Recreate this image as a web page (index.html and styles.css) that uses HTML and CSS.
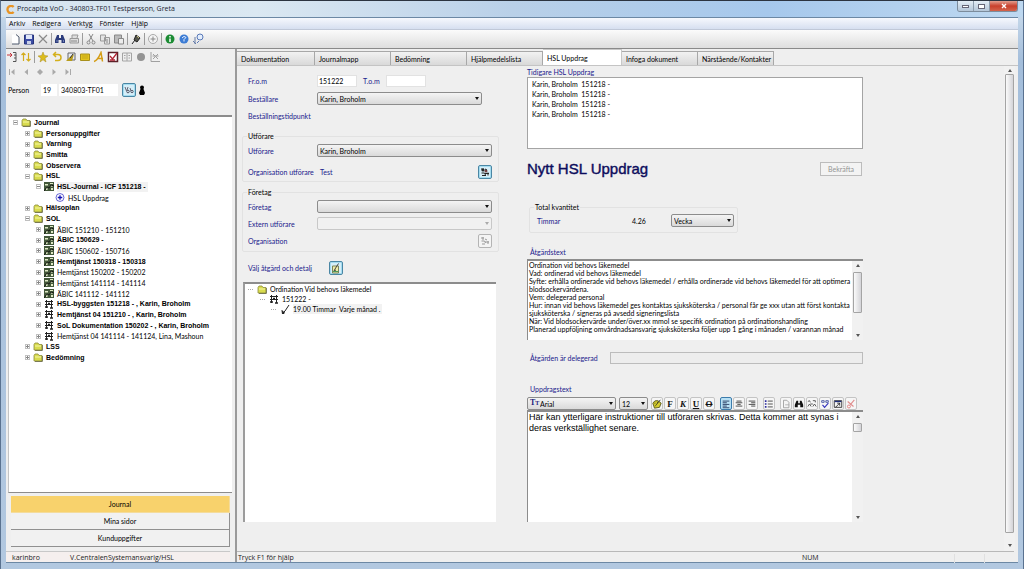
FILE: index.html
```html
<!DOCTYPE html>
<html lang="sv">
<head>
<meta charset="utf-8">
<title>Procapita VoO</title>
<link rel="stylesheet" href="styles.css">
</head>
<body>
<svg class="defs" aria-hidden="true">
  <symbol id="folder" viewBox="0 0 10 9"><path d="M1 2.5 2 1h3l1 1.5h3V8H1z" fill="#d9dc4e" stroke="#8c8c3c" stroke-width=".8"/><path d="M2 4h6" stroke="#f5f6a8"/><path d="M9.4 3v5.5H2" fill="none" stroke="#55552c" stroke-width=".7"/></symbol>
  <symbol id="plan" viewBox="0 0 10 9"><path d="M0 0h10v9H0z" fill="#43583a"/><path d="M1 2h3v1.500H1zM6 1h3v1H6zM2 5h1.500v3H2zM5.500 4l3-1v2zM7 6h2v2H7z" fill="#dfe8c4"/><path d="M0 9l3-4 2 1 2-3 3 1" fill="none" stroke="#151a12"/></symbol>
  <symbol id="block" viewBox="0 0 10 9"><path d="M2.500 0v8M7.500 0v8M1 1.500h8M1 4.500h8" stroke="#222" fill="none"/><path d="M1 7h3M6 8h3M4 3.500h2" stroke="#222" stroke-width="1.600"/></symbol>
  <symbol id="plus" viewBox="0 0 10 10"><circle cx="5" cy="5" r="4.400" fill="#fff" stroke="#2c2cc4" stroke-width=".8"/><path d="M5 2.500v5M2.500 5h5" stroke="#1212b4" stroke-width="1.400"/></symbol>
  <symbol id="tick" viewBox="0 0 10 9"><path d="M9 0 5 6 3 8" fill="none" stroke="#222"/><path d="M2 5.500 4.500 8 2.500 9z" fill="#222" stroke="#222"/></symbol>
  <symbol id="new" viewBox="0 0 12 12"><path d="M3 1.500h4.500L10 4v7H3z" fill="#fff"/><path d="M7 1.500 10 4v7H3" fill="none" stroke="#4c586c"/></symbol>
  <symbol id="save" viewBox="0 0 12 12"><path d="M1.500 2h9v9h-9z" fill="#3c4ca4" stroke="#26347c"/><path d="M3 2h6v4H3z" fill="#dfe6f8"/><path d="M4 8h4v3H4z" fill="#c8d0e8"/></symbol>
  <symbol id="cross" viewBox="0 0 12 12"><path d="M2 2l8 8M10 2l-8 8" stroke="#8a8a8a" stroke-width="1.200"/></symbol>
  <symbol id="find" viewBox="0 0 12 12"><path d="M3 2h2v3h2V2h2l2 5v3H7.500V7h-3v3H1V7z" fill="#2c3c7c"/><path d="M2.500 8h1M9 8h1" stroke="#b8c8f4"/></symbol>
  <symbol id="findk" viewBox="0 0 12 12"><path d="M3 2h2v3h2V2h2l2 5v3H7.500V7h-3v3H1V7z" fill="#111"/></symbol>
  <symbol id="print" viewBox="0 0 12 12"><path d="M4 5V2h6L9 5M2 5.500h8.500V10H2z" fill="#ddd" stroke="#999"/><path d="M3 8h6" stroke="#888"/></symbol>
  <symbol id="cut" viewBox="0 0 12 12"><path d="M4 1l4 7M8 1 4 8" stroke="#888"/><circle cx="3.500" cy="9.500" r="1.500" fill="none" stroke="#888"/><circle cx="8.500" cy="9.500" r="1.500" fill="none" stroke="#888"/></symbol>
  <symbol id="copy" viewBox="0 0 12 12"><path d="M1.500 2h5v6h-5zM5.500 4.500h5V11h-5z" fill="#e4e4e4" stroke="#999"/><path d="M7 7h2M7 9h2" stroke="#888"/></symbol>
  <symbol id="paste" viewBox="0 0 12 12"><path d="M1.500 2h7v8h-7z" fill="#bbb" stroke="#888"/><path d="M5.500 5.500h5V11h-5z" fill="#ececec" stroke="#888"/></symbol>
  <symbol id="pen" viewBox="0 0 12 12"><path d="M6 2l4 3-3 4-3-2z" fill="#55564c" stroke="#222"/><path d="M5 7l-3 4" stroke="#222"/><path d="M7 3l2 2" stroke="#c8c080"/></symbol>
  <symbol id="target" viewBox="0 0 12 12"><circle cx="6" cy="6" r="4.500" fill="#f4f4f4" stroke="#aaa"/><path d="M6 3.500v5M3.500 6h5" stroke="#888"/></symbol>
  <symbol id="info" viewBox="0 0 12 12"><circle cx="6" cy="6" r="4.500" fill="#1c8c34"/><path d="M6 3v1.500M6 5.500V9" stroke="#fff" stroke-width="1.500"/></symbol>
  <symbol id="help" viewBox="0 0 12 12"><circle cx="6" cy="6" r="4.500" fill="#3c7cd4"/><path d="M4 5q2-3 4-.5L6 6.500v2" fill="none" stroke="#e8f0ff"/></symbol>
  <symbol id="what" viewBox="0 0 12 12"><path d="M3 4v7M1 8l3 3" stroke="#667ca8" fill="none"/><circle cx="8" cy="4" r="3" fill="#e4eefc" stroke="#5878b8"/><path d="M7 8 5 10" stroke="#5878b8"/></symbol>
  <symbol id="exit" viewBox="0 0 12 12"><path d="M1 4h5M4 2l2 2-2 2" stroke="#c4343c" fill="none"/><path d="M7 1.500h3v9H7M8 4h2M8 7h2" stroke="#555" fill="none"/></symbol>
  <symbol id="sort" viewBox="0 0 12 12"><path d="M3.500 10V2M1.500 4l2-2 2 2M8.500 2v8M6.500 8l2 2 2-2" fill="none" stroke="#d4ac1c" stroke-width="1.200"/></symbol>
  <symbol id="star" viewBox="0 0 12 12"><path d="M6 1l1.400 3.500L11 5 8 7.200 9 11 6 8.800 3 11l1-3.800L1 5l3.600-.5z" fill="#dcbc1c" stroke="#a88c1c" stroke-width=".5"/></symbol>
  <symbol id="undo" viewBox="0 0 12 12"><path d="M3 3.500h4a3 3 0 0 1 0 6H4M5 1 2.500 3.500 5 6" fill="none" stroke="#d4b01c" stroke-width="1.500"/></symbol>
  <symbol id="edit" viewBox="0 0 12 12"><path d="M3 2h7v7H3z" fill="#e8ecf4" stroke="#666"/><path d="M1 10h6L9 3 5 6z" fill="#b89c1c"/><path d="M8 3 5 7" stroke="#333"/></symbol>
  <symbol id="card" viewBox="0 0 12 12"><path d="M1.500 3h9v6.500h-9z" fill="#e4c41c" stroke="#a8901c"/><path d="M3 5h6M3 7h6" stroke="#b09820" stroke-width=".6"/></symbol>
  <symbol id="fonta" viewBox="0 0 12 12"><path d="M1 10.500C4 10 6 6 8 1.500l1.500 9M4 7.500h6" fill="none" stroke="#d49c14" stroke-width="1.500"/></symbol>
  <symbol id="check" viewBox="0 0 12 12"><path d="M1.500 1.500h9v9h-9z" fill="#fff" stroke="#5c2028" stroke-width="1.500"/><path d="M3 5l2.500 3L10 2M3 9h5" fill="none" stroke="#b42434" stroke-width="1.300"/></symbol>
  <symbol id="book" viewBox="0 0 12 12"><path d="M1.500 2h9v8h-9zM6 2v8M3 4.500h1.500M7.500 4.500H9M3 7h1.500M7.500 7H9" fill="none" stroke="#a4a4a4"/></symbol>
  <symbol id="dot" viewBox="0 0 12 12"><circle cx="6" cy="6" r="4" fill="#949494"/></symbol>
  <symbol id="chart" viewBox="0 0 12 12"><path d="M2 1v9.500h9M4 8l5-5M4 3l5 5M3.500 5h6" fill="none" stroke="#a0a0a0"/></symbol>
  <symbol id="first" viewBox="0 0 12 12"><path d="M3.500 3v6" stroke="#aaa"/><path d="M8.500 3v6L5 6z" fill="#aaa"/></symbol>
  <symbol id="prev" viewBox="0 0 12 12"><path d="M8 3v6L4.500 6z" fill="#aaa"/></symbol>
  <symbol id="dia" viewBox="0 0 12 12"><path d="M6 3l3 3-3 3-3-3z" fill="#aaa"/></symbol>
  <symbol id="next" viewBox="0 0 12 12"><path d="M4.500 3v6L8 6z" fill="#aaa"/></symbol>
  <symbol id="last" viewBox="0 0 12 12"><path d="M8.500 3v6" stroke="#aaa"/><path d="M3.500 3v6L7 6z" fill="#aaa"/></symbol>
  <symbol id="glasses" viewBox="0 0 12 12"><path d="M2 3l1.500 4M5 3 4 6M7 4l1 3" stroke="#667" fill="none"/><circle cx="5" cy="7.500" r="1.300" fill="none" stroke="#556"/><circle cx="9" cy="7.500" r="1.200" fill="none" stroke="#556"/></symbol>
  <symbol id="person" viewBox="0 0 12 12"><circle cx="6" cy="3.500" r="2" fill="#000"/><path d="M4.500 5h3L9 9l-1 2H4L3 9z" fill="#000"/></symbol>
  <symbol id="people" viewBox="0 0 12 12"><circle cx="4" cy="4" r="1.600" fill="#222"/><circle cx="7" cy="5" r="1.500" fill="#744"/><path d="M2 3h3M6 3l2 1M2.500 7h3l1 2M6 7.500h4M9 6.500v3M3 9.500h4" stroke="#222" fill="none"/></symbol>
  <symbol id="peopleg" viewBox="0 0 12 12"><path d="M2 3h3M6 4l2 1M2.500 6h3l1 2M6 7h4M9 6v3M3 9h3M4 2v3" stroke="#999" fill="none"/></symbol>
  <symbol id="action" viewBox="0 0 12 12"><path d="M2.500 4h6v7h-6z" fill="#f0eca8" stroke="#7c8458"/><path d="M8.500 1.500 5 7l-1 2 2-1" fill="none" stroke="#444"/><path d="M3 9.500h5" stroke="#4c9c5c"/></symbol>
  <symbol id="paint" viewBox="0 0 12 12"><path d="M1 5q2-4 6-3l4 3-2 5-6 1z" fill="#d4cc2c" stroke="#4c4c14"/><path d="M10 1 5 7M3 5h1M6 4h1M4 8h1" stroke="#222"/></symbol>
  <symbol id="al" viewBox="0 0 12 12"><path d="M2 2.500h8M2 4.500h5M2 6.500h8M2 8.500h5M2 10.500h8" stroke="#1c2c54"/></symbol>
  <symbol id="ac" viewBox="0 0 12 12"><path d="M3 2.500h6M2 4.500h8M4 6.500h4M2 8.500h8" stroke="#333"/></symbol>
  <symbol id="ar" viewBox="0 0 12 12"><path d="M2 2.500h8M5 4.500h5M2 6.500h8M5 8.500h5" stroke="#333"/></symbol>
  <symbol id="list" viewBox="0 0 12 12"><path d="M4.500 2.500h6M4.500 6h6M4.500 9.500h6" stroke="#333"/><path d="M1 2.500h2M1 6h2M1 9.500h2" stroke="#2c2c9c" stroke-width="2"/></symbol>
  <symbol id="doc" viewBox="0 0 12 12"><path d="M3 1.500h4L9.500 4v6.500H3z" fill="#f4f4f4" stroke="#999"/><path d="M5 7h5" stroke="#aaa"/></symbol>
  <symbol id="swap" viewBox="0 0 12 12"><path d="M1 3l2-1 1 2M7 2h3v2M1 9l2-3 2 3M7 9l2-3 2 3M4 6h3" fill="none" stroke="#444"/></symbol>
  <symbol id="spell" viewBox="0 0 12 12"><path d="M2 2h3v2H2zM7 2h3v2H7z" fill="none" stroke="#3c4c9c"/><path d="M3 7l2.500 3L10 5" fill="none" stroke="#3434bc" stroke-width="1.400"/></symbol>
  <symbol id="popup" viewBox="0 0 12 12"><path d="M1.500 2h9v8h-9z" fill="#f4f4f4" stroke="#222"/><path d="M2 3h8" stroke="#1c2c7c" stroke-width="1.500"/><path d="M3 10l5-5M5 5h3v3" fill="none" stroke="#222"/></symbol>
  <symbol id="erase" viewBox="0 0 12 12"><path d="M10 1 5 7M2 3l7 6" stroke="#e08c8c" stroke-width="1.300"/><circle cx="3.500" cy="9" r="1.800" fill="none" stroke="#e07474"/></symbol>
</svg>

<div class="window">
  <header class="titlebar">
    <svg class="logo" viewBox="0 0 10 10"><path d="M8.500 2.200A4 4 0 1 0 8.500 7.800" fill="none" stroke="#e89424" stroke-width="2.600"/></svg>
    <h1 class="caption">Procapita VoO - 340803-TF01 Testpersson, Greta</h1>
    <div class="winbtns">
      <button class="winbtn" aria-label="Minimera"><i class="min"></i></button>
      <button class="winbtn" aria-label="Maximera"><i class="max"></i></button>
      <button class="winbtn close" aria-label="Stäng"><svg viewBox="0 0 8 6"><path d="M2 1l4 4M6 1 2 5" stroke="#fff" stroke-width="1.400"/></svg></button>
    </div>
  </header>

  <div class="client">
    <nav class="menu">
      <button>Arkiv</button><button>Redigera</button><button>Verktyg</button><button>Fönster</button><button>Hjälp</button>
    </nav>
    <div class="tools main-tools">
      <button aria-label="Ny"><svg><use href="#new"/></svg></button>
      <button aria-label="Spara"><svg><use href="#save"/></svg></button>
      <button aria-label="Ta bort"><svg><use href="#cross"/></svg></button>
      <i class="sep"></i>
      <button aria-label="Sök"><svg><use href="#find"/></svg></button>
      <button aria-label="Skriv ut"><svg><use href="#print"/></svg></button>
      <i class="sep"></i>
      <button aria-label="Klipp ut"><svg><use href="#cut"/></svg></button>
      <button aria-label="Kopiera"><svg><use href="#copy"/></svg></button>
      <button aria-label="Klistra in"><svg><use href="#paste"/></svg></button>
      <i class="sep"></i>
      <button aria-label="Signera"><svg><use href="#pen"/></svg></button>
      <i class="sep"></i>
      <button aria-label="Lägg till"><svg><use href="#target"/></svg></button>
      <i class="sep"></i>
      <button aria-label="Info"><svg><use href="#info"/></svg></button>
      <button aria-label="Hjälp"><svg><use href="#help"/></svg></button>
      <button aria-label="Förklaring"><svg><use href="#what"/></svg></button>
    </div>

    <div class="body">
      <aside class="side">
        <div class="tools side-tools">
          <button aria-label="Dölj"><svg><use href="#exit"/></svg></button>
          <button aria-label="Sortera"><svg><use href="#sort"/></svg></button>
          <i class="sep"></i>
          <button aria-label="Favorit"><svg><use href="#star"/></svg></button>
          <button aria-label="Ångra"><svg><use href="#undo"/></svg></button>
          <button aria-label="Redigera"><svg><use href="#edit"/></svg></button>
          <button aria-label="Kort"><svg><use href="#card"/></svg></button>
          <button aria-label="Anteckning"><svg><use href="#fonta"/></svg></button>
          <button aria-label="Bevakning"><svg><use href="#check"/></svg></button>
          <button aria-label="Bok"><svg><use href="#book"/></svg></button>
          <button aria-label="Status"><svg><use href="#dot"/></svg></button>
          <button aria-label="Diagram"><svg><use href="#chart"/></svg></button>
        </div>
        <div class="tools nav-tools">
          <button aria-label="Första"><svg><use href="#first"/></svg></button>
          <button aria-label="Föregående"><svg><use href="#prev"/></svg></button>
          <button aria-label="Aktuell"><svg><use href="#dia"/></svg></button>
          <button aria-label="Nästa"><svg><use href="#next"/></svg></button>
          <button aria-label="Sista"><svg><use href="#last"/></svg></button>
        </div>
        <div class="person">
          <label for="cent">Person</label>
          <input id="cent" class="cent" value="19">
          <input class="pnr" aria-label="Personnummer" value="340803-TF01">
          <button class="sq" aria-label="Visa"><svg><use href="#glasses"/></svg></button>
          <svg class="ic"><use href="#person"/></svg>
        </div>
        <ul class="tree journal">
          <li class="l1 b"><i class="ex open"></i><svg><use href="#folder"/></svg><span>Journal</span></li>
          <li class="l2 b"><i class="ex"></i><svg><use href="#folder"/></svg><span>Personuppgifter</span></li>
          <li class="l2 b"><i class="ex"></i><svg><use href="#folder"/></svg><span>Varning</span></li>
          <li class="l2 b"><i class="ex"></i><svg><use href="#folder"/></svg><span>Smitta</span></li>
          <li class="l2 b"><i class="ex"></i><svg><use href="#folder"/></svg><span>Observera</span></li>
          <li class="l2 b"><i class="ex open"></i><svg><use href="#folder"/></svg><span>HSL</span></li>
          <li class="l3 b"><i class="ex open"></i><svg><use href="#plan"/></svg><span class="sel">HSL-Journal - ICF 151218 -</span></li>
          <li class="l4"><i class="ex none"></i><svg><use href="#plus"/></svg><span>HSL Uppdrag</span></li>
          <li class="l2 b"><i class="ex"></i><svg><use href="#folder"/></svg><span>Hälsoplan</span></li>
          <li class="l2 b"><i class="ex open"></i><svg><use href="#folder"/></svg><span>SOL</span></li>
          <li class="l3"><i class="ex"></i><svg><use href="#plan"/></svg><span>ÄBIC 151210 - 151210</span></li>
          <li class="l3 b"><i class="ex"></i><svg><use href="#plan"/></svg><span>ÄBIC 150629 -</span></li>
          <li class="l3"><i class="ex"></i><svg><use href="#plan"/></svg><span>ÄBIC 150602 - 150716</span></li>
          <li class="l3 b"><i class="ex"></i><svg><use href="#plan"/></svg><span>Hemtjänst 150318 - 150318</span></li>
          <li class="l3"><i class="ex"></i><svg><use href="#plan"/></svg><span>Hemtjänst 150202 - 150202</span></li>
          <li class="l3"><i class="ex"></i><svg><use href="#plan"/></svg><span>Hemtjänst 141114 - 141114</span></li>
          <li class="l3"><i class="ex"></i><svg><use href="#plan"/></svg><span>ÄBIC 141112 - 141112</span></li>
          <li class="l3 b"><i class="ex"></i><svg><use href="#block"/></svg><span>HSL-byggsten 151218 - , Karin, Broholm</span></li>
          <li class="l3 b"><i class="ex"></i><svg><use href="#block"/></svg><span>Hemtjänst 04 151210 - , Karin, Broholm</span></li>
          <li class="l3 b"><i class="ex"></i><svg><use href="#block"/></svg><span>SoL Dokumentation 150202 - , Karin, Broholm</span></li>
          <li class="l3"><i class="ex"></i><svg><use href="#block"/></svg><span>Hemtjänst 04 141114 - 141124, Lina, Mashoun</span></li>
          <li class="l2 b"><i class="ex"></i><svg><use href="#folder"/></svg><span>LSS</span></li>
          <li class="l2 b"><i class="ex"></i><svg><use href="#folder"/></svg><span>Bedömning</span></li>
        </ul>
        <div class="stack">
          <button class="on">Journal</button>
          <button>Mina sidor</button>
          <button>Kunduppgifter</button>
        </div>
        <footer class="status"><span class="user">karinbro</span><span>V.CentralenSystemansvarig/HSL</span></footer>
      </aside>

      <main class="work">
        <nav class="tabs">
          <button>Dokumentation</button><button>Journalmapp</button><button>Bedömning</button><button>Hjälpmedelslista</button><button class="on">HSL Uppdrag</button><button>Infoga dokument</button><button>Närstående/Kontakter</button>
        </nav>
        <div class="page">
          <form class="left">
            <div class="row">
              <label class="lab" for="from">Fr.o.m</label><input id="from" class="date" value="151222">
              <label class="tom" for="to">T.o.m</label><input id="to" class="date">
            </div>
            <div class="row">
              <label class="lab" for="best">Beställare</label>
              <span class="dd short"><select id="best"><option>Karin, Broholm</option></select></span>
            </div>
            <div class="row"><span class="lab">Beställningstidpunkt</span></div>
            <fieldset>
              <legend>Utförare</legend>
              <div class="row">
                <label class="lab" for="utf">Utförare</label>
                <span class="dd"><select id="utf"><option>Karin, Broholm</option></select></span>
              </div>
              <div class="row org">
                <span class="lab">Organisation utförare</span><span class="val">Test</span>
                <button type="button" class="sq" aria-label="Välj organisation"><svg><use href="#people"/></svg></button>
              </div>
            </fieldset>
            <fieldset>
              <legend>Företag</legend>
              <div class="row">
                <label class="lab" for="ftg">Företag</label>
                <span class="dd"><select id="ftg"><option></option></select></span>
              </div>
              <div class="row">
                <label class="lab" for="ext">Extern utförare</label>
                <span class="dd off"><select id="ext" disabled><option></option></select></span>
              </div>
              <div class="row last">
                <span class="lab">Organisation</span><span class="val"></span>
                <button type="button" class="sq off" aria-label="Välj organisation" disabled><svg><use href="#peopleg"/></svg></button>
              </div>
            </fieldset>
            <div class="row pick">
              <span class="lab">Välj åtgärd och detalj</span>
              <button type="button" class="sq" aria-label="Välj åtgärd"><svg><use href="#action"/></svg></button>
            </div>
            <ul class="tree detail">
              <li class="d1"><i class="ln"></i><svg><use href="#folder"/></svg><span>Ordination Vid behovs läkemedel</span></li>
              <li class="d2"><i class="ln"></i><svg><use href="#block"/></svg><span>151222 -</span></li>
              <li class="d3"><i class="ln"></i><svg><use href="#tick"/></svg><span class="sel">19.00 Timmar&nbsp; Varje månad .</span></li>
            </ul>
          </form>

          <section class="right">
            <span class="cap">Tidigare HSL Uppdrag</span>
            <ul class="earlier">
              <li>Karin, Broholm&nbsp; 151218 -</li><li>Karin, Broholm&nbsp; 151218 -</li><li>Karin, Broholm&nbsp; 151218 -</li><li>Karin, Broholm&nbsp; 151218 -</li>
            </ul>
            <div class="headline"><h2>Nytt HSL Uppdrag</h2><button class="confirm" disabled>Bekräfta</button></div>
            <fieldset class="total">
              <legend>Total kvantitet</legend>
              <div class="row">
                <label class="unit" for="per">Timmar</label><span class="num">4.26</span>
                <span class="dd per"><select id="per"><option>Vecka</option></select></span>
              </div>
            </fieldset>
            <label class="cap indent" for="atg">Åtgärdstext</label>
            <div class="area small">
              <textarea id="atg">Ordination vid behovs läkemedel
Vad: ordinerad vid behovs läkemedel
Syfte: erhålla ordinerade vid behovs läkemedel / erhålla ordinerade vid behovs läkemedel för att optimera
blodsockervärdena.
Vem: delegerad personal
Hur: innan vid behovs läkemedel ges kontaktas sjuksköterska / personal får ge xxx utan att först kontakta
sjuksköterska / signeras på avsedd signeringslista
När: Vid blodsockervärde under/över.xx mmol se specifik ordination på ordinationshandling
Planerad uppföljning omvårdnadsansvarig sjuksköterska följer upp 1 gång i månaden / varannan månad</textarea>
              <div class="bar"><i class="up"></i><i class="thumb t1"></i><i class="down"></i></div>
            </div>
            <div class="row deleg"><label class="cap" for="del">Åtgärden är delegerad</label><input id="del" disabled></div>
            <label class="cap indent" for="upp">Uppdragstext</label>
            <div class="rich">
              <span class="dd font"><i class="tt">T<b>T</b></i><select aria-label="Typsnitt"><option>Arial</option></select></span>
              <span class="dd size"><select aria-label="Storlek"><option>12</option></select></span>
              <div class="grp">
                <button aria-label="Färg"><svg><use href="#paint"/></svg></button>
                <button class="bd">F</button><button class="bd it">K</button><button class="bd un">U</button><button class="bd st">O</button>
              </div>
              <div class="grp">
                <button class="act" aria-label="Vänster"><svg><use href="#al"/></svg></button>
                <button aria-label="Centrera"><svg><use href="#ac"/></svg></button>
                <button aria-label="Höger"><svg><use href="#ar"/></svg></button>
              </div>
              <div class="grp"><button aria-label="Lista"><svg><use href="#list"/></svg></button></div>
              <div class="grp">
                <button aria-label="Dokument"><svg><use href="#doc"/></svg></button>
                <button aria-label="Sök"><svg><use href="#findk"/></svg></button>
                <button aria-label="Ersätt"><svg><use href="#swap"/></svg></button>
                <button aria-label="Stavning"><svg><use href="#spell"/></svg></button>
                <button aria-label="Öppna"><svg><use href="#popup"/></svg></button>
                <button aria-label="Rensa"><svg><use href="#erase"/></svg></button>
              </div>
            </div>
            <div class="area big">
              <textarea id="upp">Här kan ytterligare instruktioner till utföraren skrivas. Detta kommer att synas i
deras verkställighet senare.</textarea>
              <div class="bar"><i class="up"></i><i class="thumb t2"></i><i class="down"></i></div>
            </div>
          </section>
          <div class="bar outer"><i class="up"></i><i class="thumb t3"></i><i class="down"></i></div>
        </div>
        <footer class="status wide"><span class="hint">Tryck F1 för hjälp</span><span class="numlk">NUM</span><i class="cell"></i><i class="cell"></i></footer>
      </main>
    </div>
  </div>
</div>
</body>
</html>
```
FILE: styles.css
```css
:root {
  --ui: Lato, "Liberation Sans", sans-serif;
  --ui-bold: "Liberation Sans", Arial, sans-serif;
  --seg: "Open Sans", "Noto Sans", sans-serif;
  --face: #efefef;
  --blue: #20208c;
}
* { box-sizing: border-box; }
body { margin: 0; font: 7px/10px var(--ui); color: #000; background: #a9c2de; }
button, input, select, textarea { font: inherit; color: inherit; margin: 0; padding: 0; }
button { border: 0; background: none; }
ul { list-style: none; margin: 0; padding: 0; }
fieldset { margin: 0; padding: 0; min-width: 0; }
svg { display: block; flex: none; width: 12px; height: 12px; }
i { font-style: normal; }
.defs { position: absolute; width: 0; height: 0; }

/* window frame */
.window {
  min-height: 100vh; display: flex; flex-direction: column;
  padding: 0 5px 6px; border: 1px solid #5a7290; border-top-color: #2c3440;
  border-bottom: 0;
  background: linear-gradient(#cfdfee, #a4bedb 60px, #b2c8e0);
}
.titlebar { display: flex; align-items: center; height: 16px; gap: 2px; margin: 0 -5px; padding-left: 5px;
  background: linear-gradient(90deg, #d4e3ef 0, #dbe8f2 25%, #b9d0e8 50%, #a6c8ec 75%, #bed8f0 100%); }
.logo { width: 9px; height: 9px; }
.caption { margin: 0; flex: 1; font: 7px/12px var(--seg); color: #1c2430; }
.winbtns { display: flex; align-self: flex-start; margin-right: 5px; border: 1px solid #7c8c9c; border-top: 0; border-radius: 0 0 3px 3px; overflow: hidden; }
.winbtn { display: flex; align-items: center; justify-content: center; width: 16px; height: 10px; background: linear-gradient(#e4edf5, #b4c6d8); border-right: 1px solid #8c9cac; }
.winbtn svg { width: 8px; height: 6px; }
.close { width: 27px; background: linear-gradient(#e4a090, #c8402c 50%, #d4644c); border: 0; }
.min { width: 7px; height: 3px; border: 1px solid #667; background: #fff; }
.max { width: 7px; height: 5px; border: 1px solid #667; background: #fff; }
.client { flex: 1; display: flex; flex-direction: column; background: var(--face); border: 1px solid #6c88a4; border-width: 1px 0; }

/* menu and tool bars */
.menu { display: flex; gap: 7px; height: 12px; padding-left: 3px; background: linear-gradient(#f6f8fd, #d6dff0); border-bottom: 1px solid #c0c8d8; font: 7px/11px var(--seg); }
.tools { display: flex; align-items: center; gap: 2px; }
.tools .sep { width: 1px; height: 12px; background: #9c9c9c; }
.main-tools { height: 19px; padding-left: 3px; background: linear-gradient(#fbfbfb, #dedede); border-bottom: 1px solid #8a8a8a; }
.body { flex: 1; display: flex; }

/* side panel */
.side { flex: none; width: 226px; display: flex; flex-direction: column; }
.side-tools { height: 15px; }
.nav-tools { height: 16px; }
.person { display: flex; align-items: center; height: 20px; padding-left: 2px; margin-bottom: 15px; }
.person label { width: 33px; }
.person input { height: 12px; border: 0; background: #fff; padding-left: 2px; }
.cent { width: 16px; margin-right: 2px; }
.pnr { width: 59px; margin-right: 4px; }
.sq { display: flex; align-items: center; justify-content: center; width: 14px; height: 14px; border: 1px solid #4a86a4; border-radius: 2px; background: #d6eef8; box-shadow: inset 0 0 0 1px #a4dcf0; }
.sq.off { border-color: #b4b4b4; background: #f4f4f4; box-shadow: none; }
.journal { flex: 1; margin: 0 0 3px 2px; background: #fff; border: 1px solid #c4c4c4; border-top: 2px solid #8c8c8c; border-bottom-color: #8c8c8c; border-right: 0; }
.tree li { display: flex; align-items: center; gap: 3px; white-space: nowrap; }
.tree svg { width: 10px; height: 9px; }
.tree .b { font-family: var(--ui-bold); font-weight: bold; color: #000; }
.journal { display: grid; align-content: start; grid-auto-rows: 11px 11px 10px; }
.sel { background: #f2f2f2; padding-right: 2px; }
.l1 { padding-left: 4px; }
.l2 { padding-left: 16px; }
.l3 { padding-left: 27px; }
.l4 { padding-left: 38px; }
.ex { position: relative; flex: none; width: 5px; height: 5px; border: 1px solid #c0c0c0; background: linear-gradient(90deg, transparent 1px, #888 1px 2px, transparent 2px), linear-gradient(transparent 1px, #888 1px 2px, transparent 2px); }
.ex.open { background: linear-gradient(transparent 1px, #888 1px 2px, transparent 2px); }
.ex.none { visibility: hidden; }
.stack { display: flex; flex-direction: column; padding: 0 2px 0 5px; }
.stack button { height: 17px; border: 1px solid #909090; border-top: 0; border-left: 0; background: #f1f1f1; }
.stack .on { background: #f8d26c; border-color: #f4dc9c; }
.status { display: flex; align-items: center; height: 11px; font: 7px/10px var(--seg); color: #222; border-top: 1px solid #c8c8c8; padding-top: 2px; }
.side .status { margin: 4px 2px 0 0; padding-left: 6px; background: #f5efee; }
.user { width: 58px; }

/* work area */
.work { flex: 1; min-width: 0; display: flex; flex-direction: column; margin-left: 3px; border-left: 2px solid #9a9a9a; }
.tabs { display: flex; align-items: flex-end; height: 17px; padding-right: 3px; border-bottom: 1px solid #c4c4c4; }
.tabs button { width: 76px; height: 14px; text-align: left; padding-left: 4px; color: #000; background: linear-gradient(#f2f2f2, #d9d9d9); border: 1px solid #a8a8a8; border-width: 1px 1px 0 0; }
.tabs button:first-child { width: 78px; }
.tabs .on { width: 79px; height: 16px; background: #fff; border-color: #c8c8c8; }
.page { flex: 1; display: flex; padding-right: 3px; }
.left { flex: 0 1 264px; display: flex; flex-direction: column; padding: 9px 0 29px 6px; }
.row { display: flex; align-items: center; min-height: 12px; margin-bottom: 5px; }
.left .row { padding-left: 5px; }
.lab, .cap, .tom, .unit, .val { color: var(--blue); white-space: nowrap; }
.lab { width: 69px; }
.date { width: 40px; height: 12px; border: 1px solid #e2e2e2; background: #fff; padding-left: 1px; }
.tom { width: 29px; padding-left: 6px; }
.dd { position: relative; display: flex; width: 175px; height: 13px; }
.dd select { appearance: none; width: 100%; height: 100%; padding: 0 12px 0 2px; border: 1px solid #8c8c8c; border-radius: 2px; background: linear-gradient(#f4f4f4, #dadada); color: #000; }
.dd::after { content: ""; position: absolute; right: 3px; top: 5px; border: 2px solid transparent; border-top: 3px solid #111; border-bottom: 0; }
.dd.short { width: 165px; }
.dd.off select { border-color: #c8c8c8; background: #f1f1f1; opacity: 1; }
.dd.off::after { border-top-color: #aaa; }
.left fieldset { width: 257px; margin: 4px 0 0 -1px; border: 1px solid #e2e2e2; border-radius: 2px; }
.left fieldset + fieldset { margin-top: 5px; }
legend { margin-left: 4px; padding: 0 1px; line-height: 10px; }
.left fieldset .row { padding-left: 5px; margin: 3px 0 4px; }
.left fieldset .org { margin: 8px 0 2px; }
.left fieldset .last { margin-bottom: 3px; }
.left .val { flex: 0 0 161px; padding-left: 3px; }
.left .pick { margin: 9px 0 7px; }
.pick .lab { width: 81px; }
.detail { flex: 1; width: 253px; background: #fff; border-top: 2px solid #8c8c8c; border-left: 2px solid #9c9c9c; }
.detail li { height: 10px; }
.ln { width: 6px; height: 1px; background: repeating-linear-gradient(90deg, #aaa 0 1px, transparent 1px 2px); }
.d1 { padding-left: 3px; }
.d2 { padding-left: 15px; }
.d3 { padding-left: 26px; }

.right { flex: 0 1 336px; margin-left: 26px; display: flex; flex-direction: column; padding: 1px 0 29px; }
.earlier { height: 72px; padding: 1px 4px; background: #fff; border: 1px solid #a4a4a4; }
.headline { display: flex; align-items: center; justify-content: space-between; margin-top: 11px; }
h2 { margin: 0; font: 15px/18px "Liberation Sans", Arial, sans-serif; color: #0c0c5c; -webkit-text-stroke: 0.4px #0c0c5c; }
.confirm { width: 42px; height: 14px; margin-right: 1px; border: 1px solid #bcbcbc; background: #f3f3f3; color: #949494; }
.total { width: 209px; margin: 24px 0 0 2px; border: 1px solid #e2e2e2; border-radius: 2px; }
.total .row { margin: 2px 0 5px; padding-left: 7px; }
.unit { width: 95px; }
.num { width: 39px; }
.dd.per { width: 63px; }
.indent { padding-left: 3px; }
.total + .cap { margin-top: 14px; }
.area { display: flex; background: #fff; border-top: 2px solid #8c8c8c; border-left: 1px solid #8c8c8c; }
.area textarea { flex: 1; min-width: 0; border: 0; outline: 0; resize: none; overflow: hidden; background: none; white-space: pre; color: #000; padding-left: 1px; }
.small { height: 81px; margin-top: 2px; }
.small textarea { line-height: 8px; }
.big { flex: 1; min-height: 80px; }
.big textarea { font: 9px/11px "Liberation Sans", Arial, sans-serif; }
.bar { flex: none; width: 11px; display: flex; flex-direction: column; align-items: center; background: #f1f1f1; }
.up, .down { margin: 3px 0; border: 2px solid transparent; }
.up { border-bottom: 3px solid #555; border-top: 0; }
.down { border-top: 3px solid #555; border-bottom: 0; margin-top: auto; }
.thumb { width: 9px; border: 1px solid #a4a4a4; border-radius: 1px; background: linear-gradient(90deg, #fafafa, #d4d4d8); }
.t1 { height: 41px; margin-top: 2px; }
.t2 { height: 9px; margin-top: 2px; }
.t3 { flex: 1; }
.outer { margin-left: auto; }
.outer .down { margin: 11px 0 4px; }
.outer .up { margin: 3px 0 2px; }
.deleg { margin: 12px 0 20px; padding-left: 3px; }
.deleg .cap { width: 80px; }
.deleg input { flex: 1; height: 12px; border: 1px solid #bcbcbc; background: #ededed; }
.rich { display: flex; align-items: center; gap: 3px; margin-top: 3px; height: 13px; }
.rich .font { width: 89px; }
.rich .size { width: 29px; }
.font select { padding-left: 12px; }
.tt { position: absolute; left: 3px; top: 1px; font: bold 8px/10px "Liberation Serif", serif; color: #22227c; }
.tt b { font-size: 6px; }
.grp { display: flex; gap: 1px; margin-right: 2px; }
.grp button { display: flex; align-items: center; justify-content: center; width: 12px; height: 13px; border: 1px solid #c4c4c4; border-radius: 2px; background: #f6f6f6; }
.grp svg { width: 10px; height: 10px; }
.bd { font: bold 9px/10px "Liberation Serif", serif; color: #111; }
.it { font-style: italic; }
.un { text-decoration: underline; }
.st { text-decoration: line-through; }
.grp .act { border-color: #3c7cac; background: #b8e0f4; }
.wide { margin-right: 4px; border-top-color: #b8b8b8; }
.hint { flex: 1; padding-left: 1px; }
.numlk { flex: 0 0 152px; }
.cell { width: 30px; height: 9px; border-left: 1px solid #e0e0e0; }
```
